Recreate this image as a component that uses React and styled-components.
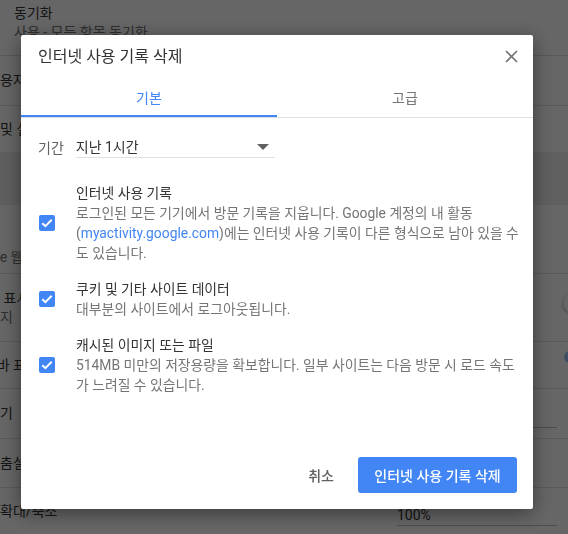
import styled, { createGlobalStyle } from "styled-components";

const Global = createGlobalStyle`
  html, body {
    margin: 0;
    padding: 0;
    overflow: hidden;
    background: #eeeeee;
  }
  body {
    font-family: "Roboto", "Noto Sans CJK KR", sans-serif;
  }
`;

const Page = styled.div`
  width: 700px;
  margin-left: -60px;
  height: 534px;
  overflow: hidden;
  color: #333;
  font-size: 14px;
`;

const Card = styled.div`
  background: #fff;
`;

const Gap = styled.div`
  height: ${(p) => p.h}px;
`;

const Row = styled.div`
  height: ${(p) => p.h}px;
  display: flex;
  padding: 0 20px 0 ${(p) => (p.indent ? 74 : 18)}px;
  box-sizing: border-box;
  border-top: ${(p) => (p.first ? "none" : "1px solid #e0e0e0")};
  align-items: ${(p) => (p.top ? "flex-start" : "center")};
  padding-top: ${(p) => (p.top ? 4 : 0)}px;
`;

const Label = styled.div`
  flex: 1;
  line-height: 19px;
`;

const Sub = styled.div`
  color: #757575;
  padding-top: ${(p) => p.pt || 0}px;
`;

const Toggle = styled.div`
  position: relative;
  width: 34px;
  height: 12px;
  border-radius: 6px;
  margin-right: ${(p) => p.mr}px;
  margin-bottom: ${(p) => p.mb || 0}px;
  background: ${(p) => (p.on ? "#a1c2fa" : "#bdbdbd")};
  &::after {
    content: "";
    position: absolute;
    top: -4px;
    left: ${(p) => (p.on ? 14 : 0)}px;
    width: 20px;
    height: 20px;
    border-radius: 50%;
    background: ${(p) => (p.on ? "#4285f4" : "#fff")};
    box-shadow: 0 1px 3px rgba(0, 0, 0, 0.4);
  }
`;

const BgSelect = styled.div`
  width: 160px;
  margin-right: 63px;
  border-bottom: 1px solid #bdbdbd;
  line-height: 20px;
  padding-top: 8px;
`;

const Overlay = styled.div`
  position: fixed;
  inset: 0;
  background: rgba(0, 0, 0, 0.6);
`;

const Dialog = styled.div`
  position: fixed;
  top: 35px;
  left: 21px;
  width: 512px;
  height: 474px;
  background: #fff;
  border-radius: 2px;
  box-shadow: 0 4px 20px rgba(0, 0, 0, 0.45);
  display: flex;
  flex-direction: column;
  color: #333;
  font-size: 14px;
`;

const Header = styled.div`
  display: flex;
  align-items: center;
  justify-content: space-between;
  height: 42px;
  padding: 0 10px 0 17px;
`;

const Title = styled.div`
  font-size: 16px;
  color: #333;
  line-height: 24px;
  padding-top: 2px;
`;

const Close = styled.button`
  width: 24px;
  height: 24px;
  border: none;
  background: none;
  padding: 0;
  display: flex;
  align-items: center;
  justify-content: center;
  cursor: pointer;
`;

const Tabs = styled.div`
  display: flex;
  border-bottom: 1px solid #e0e0e0;
`;

const Tab = styled.div`
  flex: 1;
  height: 40px;
  box-sizing: border-box;
  display: flex;
  align-items: center;
  justify-content: center;
  font-size: 14px;
  padding-top: 1px;
  color: ${(p) => (p.active ? "#4285f4" : "#757575")};
  border-bottom: 2px solid ${(p) => (p.active ? "#4285f4" : "transparent")};
`;

const Body = styled.div`
  flex: 1;
  padding: 19px 12px 0 17px;
`;

const Period = styled.div`
  display: flex;
  align-items: center;
  gap: 12px;
  margin-bottom: 24px;
`;

const PeriodLabel = styled.div`
  color: #616161;
  line-height: 20px;
`;

const Select = styled.div`
  width: 199px;
  display: flex;
  align-items: center;
  justify-content: space-between;
  line-height: 20px;
  border-bottom: 1px solid #e0e0e0;
`;

const Arrow = styled.span`
  width: 0;
  height: 0;
  border-left: 6px solid transparent;
  border-right: 6px solid transparent;
  border-top: 6px solid #616161;
  margin-right: 6px;
`;

const Item = styled.div`
  display: flex;
  align-items: center;
  margin-bottom: 15px;
`;

const Box = styled.div`
  width: 16px;
  height: 16px;
  border-radius: 2px;
  background: #4285f4;
  margin: 0 21px 0 1px;
  flex-shrink: 0;
  display: flex;
  align-items: center;
  justify-content: center;
`;

const ItemText = styled.div`
  font-size: 13.85px;
  line-height: 20px;
  padding-top: 1px;
  white-space: nowrap;
`;

const ItemTitle = styled.div`
  color: #333;
`;

const ItemDesc = styled.div`
  color: #757575;
`;

const Link = styled.a`
  color: #4285f4;
  text-decoration: none;
`;

const Footer = styled.div`
  display: flex;
  justify-content: flex-end;
  align-items: center;
  padding: 0 16px 16px 16px;
  gap: 8px;
`;

const Button = styled.button`
  height: 36px;
  border: none;
  border-radius: 3px;
  font-family: "Roboto", "Noto Sans CJK KR", sans-serif;
  font-size: 14px;
  font-weight: 500;
  padding: 0 16px;
  cursor: pointer;
  background: ${(p) => (p.primary ? "#4285f4" : "transparent")};
  color: ${(p) => (p.primary ? "#fff" : "#616161")};
  width: ${(p) => (p.primary ? "159px" : "auto")};
`;

const Check = () => (
  <svg width="12" height="10" viewBox="0 0 12 10">
    <path d="M1.3 5.2 L4.4 8.2 L10.7 1.8" fill="none" stroke="#fff" strokeWidth="2" />
  </svg>
);

const items = [
  {
    title: "인터넷 사용 기록",
    desc: (
      <>
        로그인된 모든 기기에서 방문 기록을 지웁니다. Google 계정의 내 활동
        <br />(<Link>myactivity.google.com</Link>)에는 인터넷 사용 기록이 다른 형식으로 남아 있을 수
        <br />도 있습니다.
      </>
    ),
  },
  { title: "쿠키 및 기타 사이트 데이터", desc: "대부분의 사이트에서 로그아웃됩니다." },
  {
    title: "캐시된 이미지 또는 파일",
    desc: (
      <>
        514MB 미만의 저장용량을 확보합니다. 일부 사이트는 다음 방문 시 로드 속도
        <br />가 느려질 수 있습니다.
      </>
    ),
  },
];

export default function App() {
  return (
    <>
      <Global />
      <Page>
        <Card>
          <Row h={55} indent top first>
            <Label>
              <div>동기화</div>
              <Sub>사용 - 모든 항목 동기화</Sub>
            </Label>
          </Row>
          <Row h={50}>
            <Label>다른 사용자 관리</Label>
          </Row>
          <Row h={47}>
            <Label>북마크 및 설정 가져오기</Label>
          </Row>
        </Card>
        <Gap h={53} />
        <Card>
          <Row h={68} first>
            <Label>
              <div>테마</div>
              <Sub pt={18}>Chrome 웹 스토어 열기</Sub>
            </Label>
          </Row>
          <Row h={68}>
            <Label>
              <div>홈 버튼 표시</div>
              <Sub>사용 중지</Sub>
            </Label>
            <Toggle mr={23} mb={10} />
          </Row>
          <Row h={47}>
            <Label>북마크바 표시</Label>
            <Toggle on mr={22} mb={16} />
          </Row>
          <Row h={50}>
            <Label>글꼴 크기</Label>
            <BgSelect>보통</BgSelect>
          </Row>
          <Row h={49}>
            <Label>글꼴 맞춤설정</Label>
          </Row>
          <Row h={48}>
            <Label>페이지 확대/축소</Label>
            <BgSelect>100%</BgSelect>
          </Row>
        </Card>
      </Page>
      <Overlay />
      <Dialog>
        <Header>
          <Title>인터넷 사용 기록 삭제</Title>
          <Close aria-label="닫기">
            <svg width="13" height="13" viewBox="0 0 13 13">
              <path d="M1 1 L12 12 M12 1 L1 12" stroke="#757575" strokeWidth="1.7" />
            </svg>
          </Close>
        </Header>
        <Tabs>
          <Tab active>기본</Tab>
          <Tab>고급</Tab>
        </Tabs>
        <Body>
          <Period>
            <PeriodLabel>기간</PeriodLabel>
            <Select>
              <span>지난 1시간</span>
              <Arrow />
            </Select>
          </Period>
          {items.map((it) => (
            <Item key={it.title}>
              <Box>
                <Check />
              </Box>
              <ItemText>
                <ItemTitle>{it.title}</ItemTitle>
                <ItemDesc>{it.desc}</ItemDesc>
              </ItemText>
            </Item>
          ))}
        </Body>
        <Footer>
          <Button>취소</Button>
          <Button primary>인터넷 사용 기록 삭제</Button>
        </Footer>
      </Dialog>
    </>
  );
}
